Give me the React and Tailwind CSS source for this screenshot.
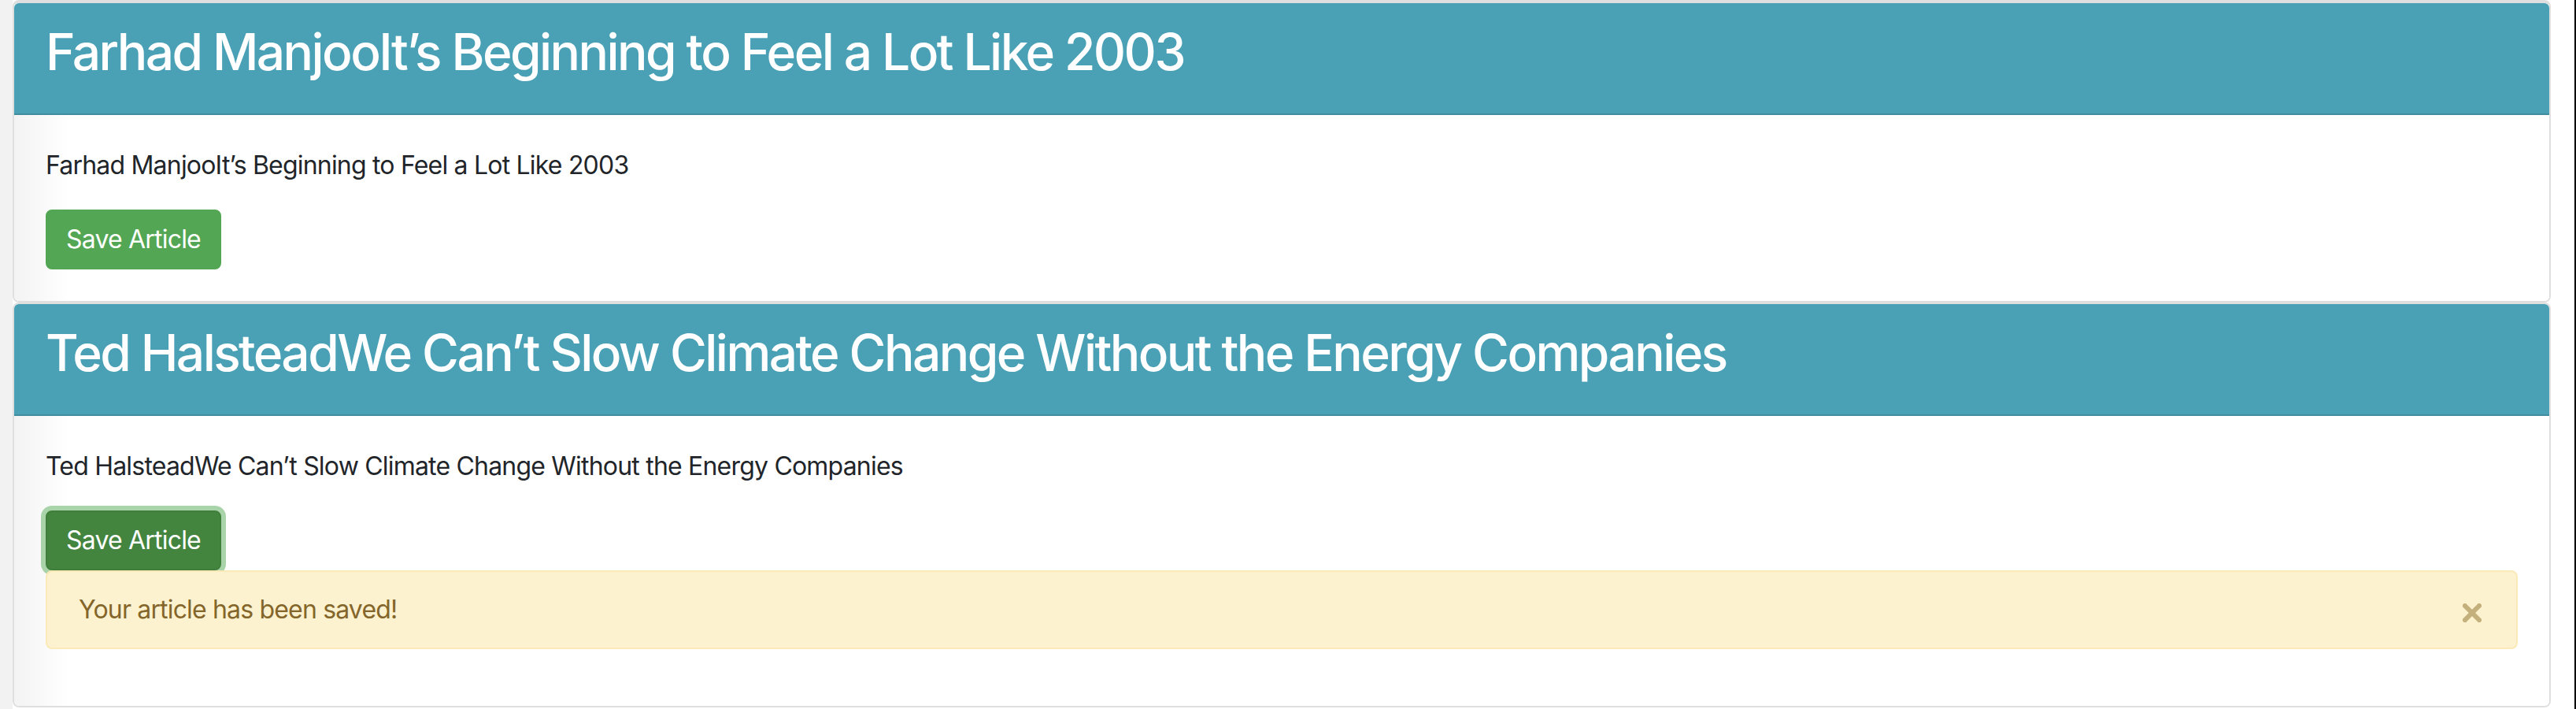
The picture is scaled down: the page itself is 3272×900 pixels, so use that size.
import React from 'react'

const ARTICLES = [
  {
    title: 'Farhad ManjooIt’s Beginning to Feel a Lot Like 2003',
    saved: false,
  },
  {
    title: 'Ted HalsteadWe Can’t Slow Climate Change Without the Energy Companies',
    saved: true,
  },
]

function CloseIcon() {
  return (
    <svg width="24" height="24" viewBox="0 0 24 24" fill="none">
      <path d="M3 3 21 21M21 3 3 21" stroke="#c4b07c" strokeWidth="6" strokeLinecap="square" />
    </svg>
  )
}

function ArticleCard({ article, first }) {
  return (
    <div
      className={`flex flex-col rounded-[8px] border-[2px] border-[#dfdfdf] bg-white ${
        first ? 'border-t-[4px]' : ''
      }`}
    >
      {/* Header */}
      <div className="rounded-t-[6px] border-b-[2px] border-[#418d9f] bg-[#4aa1b6] px-[40px] pt-[24px] pb-[26px]">
        <h2 className="mb-[14px] text-[64px] font-medium leading-[76px] tracking-[-0.04em] text-white">
          {article.title}
        </h2>
      </div>

      {/* Body */}
      <div className="rounded-b-[6px] bg-[linear-gradient(to_right,#f3f3f3,#ffffff_70px)] p-[40px]">
        <p className="mb-[32px] text-[32px] leading-[48px] tracking-[-0.025em] text-[#212529]">
          {article.title}
        </p>
        <button
          type="button"
          className={`rounded-[8px] border-[2px] px-[24px] py-[12px] text-[32px] leading-[48px] tracking-[-0.025em] text-white ${
            article.saved
              ? 'border-[#3f7f3b] bg-[#43853f] shadow-[0_0_0_6px_#a9d3a9]'
              : 'border-[#53a653] bg-[#53a653]'
          }`}
        >
          Save Article
        </button>
        {article.saved && (
          <div className="relative mb-[32px] flex items-center justify-between rounded-[8px] border-[2px] border-[#fbeab7] bg-[#fcf2d0] py-[24px] pl-[40px] pr-[44px]">
            <span className="text-[32px] leading-[48px] tracking-[-0.026em] text-[#85662a]">
              Your article has been saved!
            </span>
            <button type="button" aria-label="Close" className="mt-[8px] flex">
              <CloseIcon />
            </button>
          </div>
        )}
      </div>
    </div>
  )
}

export default function App() {
  return (
    <div className="flex min-h-[900px] w-[3272px] bg-white font-['Inter',sans-serif]">
      <div className="w-[16px] shrink-0 bg-[#f2f2f2]" />
      <div className="flex flex-1 flex-col">
        {ARTICLES.map((a, i) => (
          <ArticleCard key={i} article={a} first={i === 0} />
        ))}
      </div>
      <div className="w-[30px] shrink-0 bg-white" />
      <div className="w-[2px] shrink-0 bg-black" />
    </div>
  )
}
